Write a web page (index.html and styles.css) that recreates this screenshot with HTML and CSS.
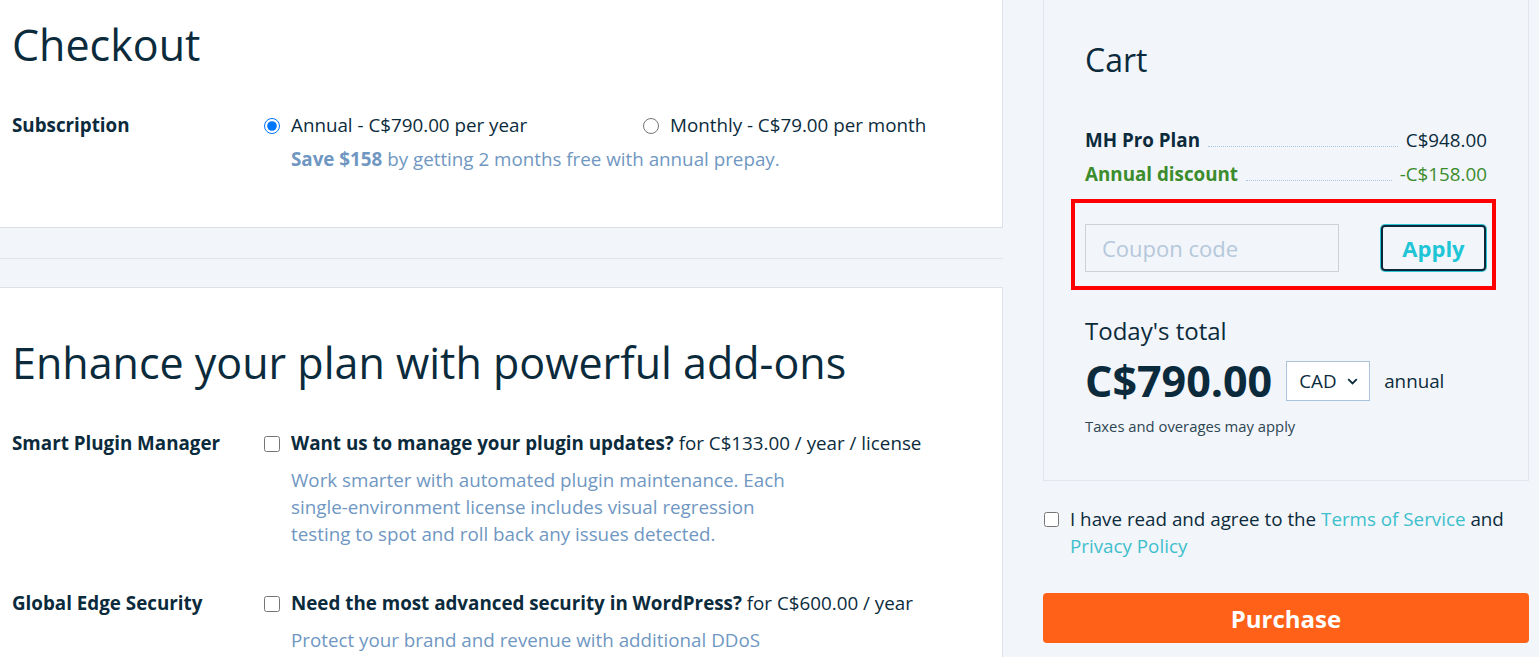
FILE: index.html
```html
<!DOCTYPE html>
<html lang="en">
<head>
    <meta charset="UTF-8">
    <meta name="viewport" content="width=device-width, initial-scale=1.0">
    <title>Checkout</title>
    <link rel="stylesheet" href="styles.css">
</head>
<body>
    <div class="page">
        <main class="main">
            <section class="card card-top">
                <h1 class="title">Checkout</h1>
                <div class="row">
                    <div class="row-label">Subscription</div>
                    <div class="row-body">
                        <div class="options">
                            <label class="option plan">
                                <input type="radio" name="plan" checked>
                                <span>Annual - C$790.00 per year</span>
                            </label>
                            <label class="option plan">
                                <input type="radio" name="plan">
                                <span>Monthly - C$79.00 per month</span>
                            </label>
                        </div>
                        <p class="note"><strong>Save $158</strong> by getting 2 months free with annual prepay.</p>
                    </div>
                </div>
            </section>

            <div class="divider"></div>

            <section class="card card-addons">
                <h1 class="title">Enhance your plan with powerful add-ons</h1>
                <div class="row row-first">
                    <div class="row-label">Smart Plugin Manager</div>
                    <div class="row-body">
                        <label class="option">
                            <input type="checkbox">
                            <span><strong>Want us to manage your plugin updates?</strong> for C$133.00 / year / license</span>
                        </label>
                        <p class="desc">Work smarter with automated plugin maintenance. Each single-environment license includes visual regression testing to spot and roll back any issues detected.</p>
                    </div>
                </div>
                <div class="row row-next">
                    <div class="row-label">Global Edge Security</div>
                    <div class="row-body">
                        <label class="option">
                            <input type="checkbox">
                            <span><strong>Need the most advanced security in WordPress?</strong> for C$600.00 / year</span>
                        </label>
                        <p class="desc">Protect your brand and revenue with additional DDoS protection and a web application firewall.</p>
                    </div>
                </div>
            </section>
        </main>

        <aside class="side">
            <div class="cart">
                <h2 class="cart-title">Cart</h2>
                <div class="lines">
                    <div class="line">
                        <span class="line-name">MH Pro Plan</span>
                        <span class="dots"></span>
                        <span class="line-price">C$948.00</span>
                    </div>
                    <div class="line discount">
                        <span class="line-name">Annual discount</span>
                        <span class="dots"></span>
                        <span class="line-price">-C$158.00</span>
                    </div>
                </div>

                <div class="coupon">
                    <input type="text" class="coupon-input" placeholder="Coupon code">
                    <button class="apply">Apply</button>
                </div>

                <div class="total-label">Today's total</div>
                <div class="total">
                    <span class="total-amount">C$790.00</span>
                    <div class="currency">
                        <span>CAD</span>
                        <svg width="11" height="7" viewBox="0 0 11 7"><path d="M1.2 1.2 L5.5 5.5 L9.8 1.2" fill="none" stroke="#0b2b3c" stroke-width="1.8"/></svg>
                    </div>
                    <span class="period">annual</span>
                </div>
                <div class="taxes">Taxes and overages may apply</div>
            </div>

            <label class="agree">
                <input type="checkbox">
                <span>I have read and agree to the <a href="#">Terms of Service</a> and <a href="#">Privacy Policy</a></span>
            </label>

            <button class="purchase">Purchase</button>
        </aside>
    </div>
</body>
</html>
```

FILE: styles.css
```css
body {
    margin: 0;
    background: #f2f5f9;
    font-family: 'Open Sans', 'Noto Sans', sans-serif;
    color: #0b2b3c;
    font-size: 18.8px;
    line-height: 27px;
    overflow: hidden;
}
.page {
    display: flex;
    align-items: flex-start;
}
.main {
    width: 1003px;
    flex: none;
}
.card {
    background: #fff;
    border-right: 1px solid #dde2e7;
    padding: 0 12px;
}
.card-top {
    padding-top: 15px;
    padding-bottom: 54px;
    border-bottom: 1px solid #d9dee3;
}
.card-addons {
    padding-top: 45px;
    padding-bottom: 40px;
    border-top: 1px solid #dde2e7;
}
.divider {
    height: 30px;
    border-bottom: 1px solid #e0e5ea;
    margin-bottom: 28px;
}
.title {
    margin: 0;
    font-size: 43px;
    line-height: 60px;
    font-weight: 400;
}
.row {
    display: flex;
    margin-top: 37px;
}
.row-next {
    margin-top: 42px;
}
.row-label {
    width: 252px;
    flex: none;
    font-weight: 700;
}
.options {
    display: flex;
}
.option {
    display: flex;
    align-items: flex-start;
}
.plan {
    width: 379px;
}
.option input {
    width: 16px;
    height: 16px;
    margin: 6px 11px 0 0;
    flex: none;
}
.note {
    margin: 7px 0 0 27px;
    color: #6f97c2;
}
.desc {
    margin: 10px 0 0 27px;
    max-width: 512px;
    color: #6f97c2;
}
.side {
    width: 486px;
    margin-left: 40px;
    flex: none;
}
.cart {
    border: 1px solid #e1e6ec;
    border-top: none;
    padding: 38px 41px 44px 41px;
}
.cart-title {
    margin: 0;
    font-size: 32px;
    line-height: 43px;
    font-weight: 400;
}
.lines {
    margin-top: 46px;
}
.line {
    display: flex;
    align-items: baseline;
    margin-top: 7px;
}
.line:first-child {
    margin-top: 0;
}
.line-name {
    font-weight: 700;
}
.dots {
    flex: 1;
    border-bottom: 1px dotted #a9c5e2;
    margin: 0 8px;
}
.discount {
    color: #3b8c2c;
}
.coupon {
    display: flex;
    justify-content: space-between;
    border: 4px solid #ff0000;
    margin: 11px -9px 0 -14px;
    padding: 21px 6px 14px 10px;
}
.coupon-input {
    width: 254px;
    height: 48px;
    box-sizing: border-box;
    border: 1px solid #cdd2d7;
    background: #f2f5f9;
    font-family: inherit;
    font-size: 22px;
    padding: 0 16px;
    color: #0b2b3c;
}
.coupon-input::placeholder {
    color: #b5c8dc;
}
.apply {
    width: 105px;
    height: 46px;
    margin-top: 1px;
    background: transparent;
    border: 2px solid #0d2838;
    border-radius: 4px;
    box-shadow: 0 0 0 1px #2bc6d6;
    color: #1ec5d6;
    font-family: inherit;
    font-size: 22px;
    font-weight: 700;
}
.total-label {
    margin-top: 25px;
    font-size: 24px;
    line-height: 32px;
}
.total {
    display: flex;
    align-items: center;
    margin-top: 7px;
}
.total-amount {
    font-size: 43px;
    font-weight: 700;
    line-height: 54px;
}
.currency {
    display: flex;
    align-items: center;
    justify-content: space-between;
    width: 84px;
    height: 40px;
    box-sizing: border-box;
    margin-left: 14px;
    padding: 0 11px 0 12px;
    background: #fff;
    border: 1px solid #aac4dc;
}
.period {
    margin-left: 14px;
}
.taxes {
    margin-top: 8px;
    font-size: 14.8px;
    line-height: 20px;
    color: #2e4553;
}
.agree {
    display: flex;
    align-items: flex-start;
    margin-top: 25px;
    padding-right: 20px;
}
.agree input {
    width: 15px;
    height: 15px;
    margin: 6px 11px 0 1px;
    flex: none;
}
.agree a {
    color: #3dbfcd;
    text-decoration: none;
}
.purchase {
    display: block;
    width: 100%;
    height: 50px;
    margin-top: 33px;
    border: none;
    border-radius: 4px;
    background: #ff6119;
    color: #fff;
    font-family: inherit;
    font-size: 24px;
    font-weight: 700;
}
```
